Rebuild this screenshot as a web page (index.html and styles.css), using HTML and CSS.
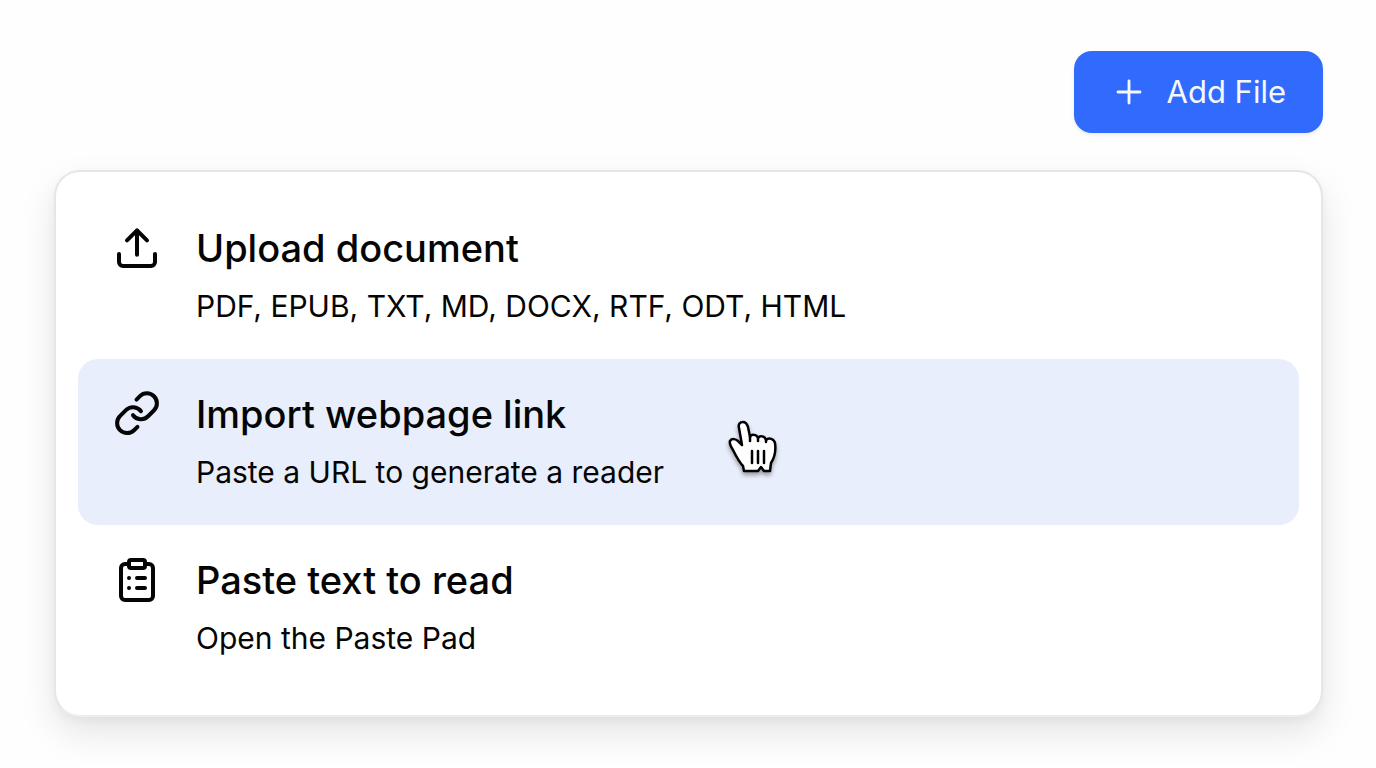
FILE: index.html
```html
<!DOCTYPE html>
<html lang="en">
<head>
  <meta charset="UTF-8" />
  <meta name="viewport" content="width=device-width, initial-scale=1.0"/>
  <title>Add File</title>
  <link rel="stylesheet" href="styles.css">
</head>
<body>

  <header class="toolbar">
    <button class="add-btn" type="button" aria-haspopup="menu" aria-expanded="true">
      <svg class="plus" viewBox="0 0 24 24" aria-hidden="true"><path d="M5.4 12h13.2M12 5.4v13.2"/></svg>
      <span>Add File</span>
    </button>
  </header>

  <div class="menu" role="menu">
    <button class="item" type="button" role="menuitem">
      <svg class="icon" viewBox="0 0 24 24" aria-hidden="true">
        <path d="M12 3.4v12"/>
        <path d="m17 8.2-5-5-5 5"/>
        <path d="M21 15v4a2 2 0 0 1-2 2H5a2 2 0 0 1-2-2v-4"/>
      </svg>
      <span class="text">
        <span class="title">Upload document</span>
        <span class="desc">PDF, EPUB, TXT, MD, DOCX, RTF, ODT, HTML</span>
      </span>
    </button>

    <button class="item active" type="button" role="menuitem">
      <svg class="icon" viewBox="0 0 24 24" aria-hidden="true">
        <path d="M10 12.6a5 5 0 0 0 7.54.54l3-3a5 5 0 0 0-7.07-7.07l-1.72 1.71"/>
        <path d="M14 10.6a5 5 0 0 0-7.54-.54l-3 3a5 5 0 0 0 7.07 7.07l1.71-1.71"/>
      </svg>
      <span class="text">
        <span class="title">Import webpage link</span>
        <span class="desc">Paste a URL to generate a reader</span>
      </span>
      <svg class="pointer" viewBox="0 0 50 56" aria-hidden="true">
        <path d="M16 51 15 46 C11 42 8 36 5 30 C3 27 1 24 2 21 C4 18 8 19 10 21 L14 25 11 8 C10 4 12 2 15 2 C18 2 19 4 20 7 L22 17 C23 14 29 14 30 18 C32 15 37 16 38 20 C41 17 46 19 47 23 C48 30 47 37 43 43 L42 51 H36 L33 47 30 51 Z"/>
        <path d="M22 17v4M30 18v3M38 20v2M24 31v12M30 31v12M36 31v12"/>
      </svg>
    </button>

    <button class="item" type="button" role="menuitem">
      <svg class="icon" viewBox="0 0 24 24" aria-hidden="true">
        <rect x="8" y="2" width="8" height="4" rx="1"/>
        <path d="M16 4h2a2 2 0 0 1 2 2v14a2 2 0 0 1-2 2H6a2 2 0 0 1-2-2V6a2 2 0 0 1 2-2h2"/>
        <path d="M12 11h4M12 16h4M8 11h.01M8 16h.01"/>
      </svg>
      <span class="text">
        <span class="title">Paste text to read</span>
        <span class="desc">Open the Paste Pad</span>
      </span>
    </button>
  </div>

</body>
</html>
```
FILE: styles.css
```css
:root {
  --bg-color: #fefefe;
  --primary-color: #316bfd;
  --hover-color: #e8eefb;
  --text-color: #050505;
}

* {
  margin: 0;
  padding: 0;
  box-sizing: border-box;
}

body {
  font-family: 'Inter', sans-serif;
  background: var(--bg-color);
  color: var(--text-color);
  padding: 51px 53px 52px 54px;
}

button {
  font: inherit;
  color: inherit;
  border: none;
  cursor: pointer;
}

svg {
  flex: none;
  fill: none;
  stroke: currentColor;
  stroke-width: 2;
  stroke-linecap: round;
  stroke-linejoin: round;
}

.toolbar {
  display: flex;
  justify-content: flex-end;
  margin-bottom: 37px;
}

.add-btn {
  display: flex;
  align-items: center;
  gap: 18px;
  padding: 21px 37px 21px 35px;
  border-radius: 18px;
  background-color: var(--primary-color);
  color: #f5f8ff;
  font-size: 31px;
  line-height: 40px;
  box-shadow: 0 2px 4px rgba(0, 0, 0, 0.08);
}

.plus {
  width: 40px;
  height: 40px;
  stroke-width: 1.7;
}

.menu {
  padding: 21px 22px 24px;
  border: 2px solid #e6e6e7;
  border-bottom-color: #ededed;
  border-radius: 26px;
  background-color: #fff;
  box-shadow: 0 16px 36px rgba(0, 0, 0, 0.1), 0 4px 10px rgba(0, 0, 0, 0.04);
}

.item {
  position: relative;
  display: flex;
  gap: 35px;
  width: 100%;
  padding: 31px 35px 33px;
  border-radius: 20px;
  background: none;
  text-align: left;
}

.item.active,
.item:hover {
  background-color: var(--hover-color);
}

.icon {
  width: 48px;
  height: 48px;
}

.text {
  display: flex;
  flex-direction: column;
  gap: 14px;
}

.title {
  font-size: 38px;
  font-weight: 500;
  line-height: 48px;
}

.desc {
  font-size: 30px;
  line-height: 40px;
}

/* hand cursor over the hovered row */
.pointer {
  position: absolute;
  top: 61px;
  left: 650px;
  width: 50px;
  height: 56px;
  fill: #fff;
  stroke: #000;
  stroke-width: 2.5;
  filter: drop-shadow(0 3px 2px rgba(0, 0, 0, 0.35));
}
```
